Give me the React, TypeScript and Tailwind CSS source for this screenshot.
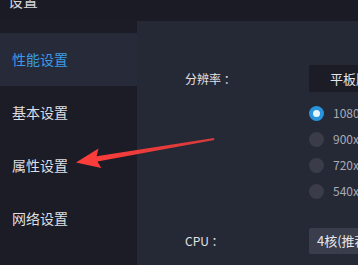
import React from 'react';

const navItems = ['性能设置', '基本设置', '属性设置', '网络设置', '其他设置'];
const resolutions = ['1080x1920', '900x1600', '720x1280', '540x960'];

const font = { fontFamily: '"Noto Sans CJK SC", "Noto Sans", sans-serif' };

// red annotation arrow pointing at the third sidebar entry
const Arrow: React.FC = () => (
  <svg
    className="absolute left-0 top-0 pointer-events-none"
    width={358}
    height={265}
    viewBox="0 0 358 265"
  >
    <defs>
      <linearGradient id="arrowRed" x1="0" y1="0" x2="1" y2="0">
        <stop offset="0" stopColor="#ff3d3a" />
        <stop offset="1" stopColor="#d63b3b" />
      </linearGradient>
    </defs>
    <polygon
      points="76,162.5 98.5,148.5 96.6,156.2 214,138 214.3,140 97.4,161.4 101.3,168"
      fill="url(#arrowRed)"
    />
  </svg>
);

export default function App() {
  return (
    <div className="relative w-[358px] h-[265px] overflow-hidden bg-[#1b1c26] text-[#dcdde2]" style={font}>
      <div className="h-[21px] bg-[#1a1b24] overflow-hidden">
        <div className="pl-[8px] -mt-[9px] text-[15px] leading-[20px] text-[#d4d5da]">设置</div>
      </div>

      <div className="flex h-[244px]">
        <div className="w-[137px] shrink-0 bg-[#1b1c26] pt-[12px]">
          {navItems.map((item, i) => (
            <div
              key={item}
              className={
                i === 0
                  ? 'h-[53px] flex items-center pl-[12px] text-[14px] bg-[#262a39] text-[#3c9be2]'
                  : 'h-[53px] flex items-center pl-[12px] text-[14px] text-[#dedfe4]'
              }
            >
              {item}
            </div>
          ))}
        </div>

        <div className="flex-1 bg-[#252835] pl-[48px] pt-[44px] overflow-hidden">
          <div className="flex items-center">
            <div className="w-[124px] shrink-0 text-[12px] text-[#e2e3e8]">分辨率&nbsp;：</div>
            <div className="h-[27px] w-[160px] shrink-0 bg-[#1b1c25] rounded-[2px] flex items-center pl-[21px] text-[13px] text-[#e6e7ea] whitespace-nowrap">
              平板版（1600x900）
            </div>
          </div>

          <div className="ml-[124px] mt-[8px]">
            {resolutions.map((r, i) => (
              <div key={r} className="h-[26px] flex items-center whitespace-nowrap">
                {i === 0 ? (
                  <span className="w-[15px] h-[15px] rounded-full bg-[#2794dc] flex items-center justify-center shrink-0">
                    <span className="w-[7px] h-[7px] rounded-full bg-[#e6f6ff]" />
                  </span>
                ) : (
                  <span className="w-[15px] h-[15px] rounded-full bg-[#3a3c49] shrink-0" />
                )}
                <span className="ml-[9px] text-[12px] text-[#a8acb7]">{r}</span>
              </div>
            ))}
          </div>

          <div className="flex items-center mt-[24px]">
            <div className="w-[124px] shrink-0 text-[12px] text-[#e2e3e8]">CPU&nbsp;：</div>
            <div className="h-[26px] w-[160px] shrink-0 bg-[#3a3d4b] rounded-[2px] flex items-center pl-[8px] text-[13px] text-[#e6e7ea] whitespace-nowrap">
              4核(推荐)
            </div>
          </div>
        </div>
      </div>

      <Arrow />
    </div>
  );
}
